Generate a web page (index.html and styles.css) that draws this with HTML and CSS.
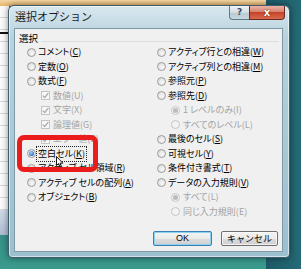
FILE: index.html
```html
<!DOCTYPE html>
<html lang="ja">
<head>
<meta charset="utf-8">
<link rel="stylesheet" href="styles.css">
</head>
<body>
<div class="dialog">
  <div class="titlebar">
    <span class="title">選択オプション</span>
    <div class="caps">
      <span class="cap help">?</span>
      <span class="cap close">x</span>
    </div>
  </div>
  <div class="client">
    <div class="group">
      <div class="legend"><span>選択</span><i class="rule"></i></div>
      <div class="cols">
        <div class="col">
          <div class="row"><span class="radio"></span><span class="lbl">コメント(<u>C</u>)</span></div>
          <div class="row"><span class="radio"></span><span class="lbl">定数(<u>O</u>)</span></div>
          <div class="row"><span class="radio"></span><span class="lbl">数式(<u>F</u>)</span></div>
          <div class="row sub dis"><span class="check"><svg viewBox="0 0 9 9" width="9" height="9"><path d="M1.8 4.6 L3.7 6.6 L7.3 2.2" fill="none" stroke="#a8a8a8" stroke-width="1.3"/></svg></span><span class="lbl">数値(U)</span></div>
          <div class="row sub dis"><span class="check"><svg viewBox="0 0 9 9" width="9" height="9"><path d="M1.8 4.6 L3.7 6.6 L7.3 2.2" fill="none" stroke="#a8a8a8" stroke-width="1.3"/></svg></span><span class="lbl">文字(X)</span></div>
          <div class="row sub dis"><span class="check"><svg viewBox="0 0 9 9" width="9" height="9"><path d="M1.8 4.6 L3.7 6.6 L7.3 2.2" fill="none" stroke="#a8a8a8" stroke-width="1.3"/></svg></span><span class="lbl">論理値(G)</span></div>
          <div class="row sub dis"><span class="check"><svg viewBox="0 0 9 9" width="9" height="9"><path d="M1.8 4.6 L3.7 6.6 L7.3 2.2" fill="none" stroke="#a8a8a8" stroke-width="1.3"/></svg></span><span class="lbl">エラー値(E)</span></div>
          <div class="row"><span class="radio on"></span><span class="lbl focus">空白セル(<u>K</u>)</span></div>
          <div class="row"><span class="radio"></span><span class="lbl">アクティブ セル領域(<u>R</u>)</span></div>
          <div class="row"><span class="radio"></span><span class="lbl">アクティブ セルの配列(<u>A</u>)</span></div>
          <div class="row"><span class="radio"></span><span class="lbl">オブジェクト(<u>B</u>)</span></div>
        </div>
        <div class="col">
          <div class="row"><span class="radio"></span><span class="lbl">アクティブ行との相違(<u>W</u>)</span></div>
          <div class="row"><span class="radio"></span><span class="lbl">アクティブ列との相違(<u>M</u>)</span></div>
          <div class="row"><span class="radio"></span><span class="lbl">参照元(<u>P</u>)</span></div>
          <div class="row"><span class="radio"></span><span class="lbl">参照先(<u>D</u>)</span></div>
          <div class="row sub dis"><span class="radio on"></span><span class="lbl">1 レベルのみ(I)</span></div>
          <div class="row sub dis"><span class="radio"></span><span class="lbl">すべてのレベル(L)</span></div>
          <div class="row"><span class="radio"></span><span class="lbl">最後のセル(<u>S</u>)</span></div>
          <div class="row"><span class="radio"></span><span class="lbl">可視セル(<u>Y</u>)</span></div>
          <div class="row"><span class="radio"></span><span class="lbl">条件付き書式(<u>T</u>)</span></div>
          <div class="row"><span class="radio"></span><span class="lbl">データの入力規則(<u>V</u>)</span></div>
          <div class="row sub dis"><span class="radio on"></span><span class="lbl">すべて(L)</span></div>
          <div class="row sub dis"><span class="radio"></span><span class="lbl">同じ入力規則(E)</span></div>
        </div>
      </div>
    </div>
    <div class="buttons">
      <span class="btn default">OK</span>
      <span class="btn">キャンセル</span>
    </div>
  </div>
</div>
<div class="highlight"></div>
<svg class="cursor" width="8" height="12" viewBox="0 0 8 12"><path d="M0.5 0.5 L0.5 9.5 L2.6 7.6 L4 11 L5.4 10.4 L4 7.2 L6.8 7.2 Z" fill="#fff" stroke="#000" stroke-width="0.9"/></svg>
</body>
</html>
```
FILE: styles.css
```css
html, body { margin: 0; padding: 0; }
body {
  width: 301px;
  height: 269px;
  overflow: hidden;
  position: relative;
  font-family: "Noto Sans CJK JP", "Noto Sans", sans-serif;
  background:
    linear-gradient(#f5d7a4, #e8b46c) 0 0 / 266px 6px no-repeat,
    linear-gradient(#111, #111) 0 32px / 9px 2px no-repeat,
    repeating-linear-gradient(to bottom, #fafafa 0 11px, #d6d6d6 11px 12px) 0 6px / 9px 204px no-repeat,
    linear-gradient(#d0dbe8, #aebbd0) 0 210px / 9px 25px no-repeat,
    linear-gradient(to right, #1d5966, #246a76) 266px 0 / 35px 269px no-repeat,
    linear-gradient(to bottom, #1f5f6c 0, #2a7b80 60%, #3a9a8c 100%);
}
.dialog {
  position: absolute;
  left: 8px;
  top: 5px;
  width: 282px;
  height: 253px;
  box-sizing: border-box;
  border: 1px solid #3f5d6b;
  border-radius: 6px 6px 4px 4px;
  background: linear-gradient(to bottom, #d9e8ef 0, #b8d2de 12%, #a8c7d5 60%, #9cc0cf 100%);
  box-shadow: 0 0 6px rgba(0,0,0,.45), inset 0 0 0 1px rgba(255,255,255,.55);
  padding: 0 6px 5px 5px;
  display: flex;
  flex-direction: column;
}
.titlebar {
  height: 22px;
  display: flex;
  justify-content: space-between;
  align-items: flex-start;
}
.title {
  margin: 3px 0 0 1px;
  font-size: 11px;
  line-height: 14px;
  color: #1a1a1a;
}
.caps {
  display: flex;
  margin-right: -2px;
  margin-top: 0;
}
.cap {
  height: 14px;
  box-sizing: border-box;
  display: flex;
  align-items: center;
  justify-content: center;
  font-family: "DejaVu Sans", sans-serif;
  font-weight: bold;
  line-height: 1;
}
.help {
  width: 20px;
  border: 1px solid #5f7a88;
  border-top: none;
  border-right: none;
  border-radius: 0 0 0 4px;
  background: linear-gradient(#eef3f6, #d2dde3 50%, #b9c9d2 51%, #c9d8e0);
  color: #3c4c56;
  font-size: 9px;
}
.close {
  width: 36px;
  border: 1px solid #6b2a22;
  border-top: none;
  border-radius: 0 0 4px 0;
  background: linear-gradient(#e9b3a6, #d7826d 45%, #c5432b 50%, #d96a4c);
  color: #fff;
  font-size: 10px;
  text-shadow: 0 0 1px #5a1a10, 0 0 1px #5a1a10;
}
.client {
  flex: 1;
  background: #f0f0f0;
  border: 1px solid #7f9aa6;
  display: flex;
  flex-direction: column;
  color: #000;
  font-size: 9px;
}
.group {
  flex: 1;
  margin: 0 3px 0 2px;
}
.legend {
  display: flex;
  align-items: center;
  height: 15px;
  margin-top: 2px;
}
.legend span {
  padding: 0 3px 0 2px;
  font-size: 9.5px;
  line-height: 15px;
}
.rule {
  flex: 1;
  height: 1px;
  margin-top: 5px;
  background: #d8dde0;
}
.cols {
  display: grid;
  grid-template-columns: 130px 1fr;
  padding-left: 10px;
  margin-top: -1px;
}
.row {
  display: flex;
  align-items: center;
  height: 14.5px;
  gap: 2px;
  white-space: nowrap;
}
.row.sub {
  padding-left: 14px;
  gap: 3px;
}
.lbl {
  line-height: 12px;
  font-feature-settings: "palt";
}
.dis .lbl { color: #a3a3a3; }
u { text-decoration-thickness: 1px; text-underline-offset: 1px; }
.radio {
  flex: none;
  width: 9px;
  height: 9px;
  box-sizing: border-box;
  border-radius: 50%;
  border: 1px solid #9c9c9c;
  background: radial-gradient(circle at 60% 65%, #f8f8f8 0, #e4e4e4 60%, #cfcfcf 100%);
  display: flex;
  align-items: center;
  justify-content: center;
}
.radio.on::after {
  content: "";
  width: 5px;
  height: 5px;
  border-radius: 50%;
  background: radial-gradient(circle at 40% 35%, #9fd4ff, #2a72c8 70%, #1b4f9a);
}
.dis .radio {
  border-color: #c6c6c6;
  background: #f3f3f3;
}
.dis .radio.on::after {
  background: #bcbcbc;
}
.check {
  flex: none;
  width: 9px;
  height: 9px;
  box-sizing: border-box;
  border: 1px solid #c4c4c4;
  background: #f7f7f7;
  display: flex;
}
.check svg { margin: -1px; }
.focus {
  outline: 1px dotted #222;
  outline-offset: 1px;
}
.buttons {
  display: flex;
  justify-content: flex-end;
  gap: 9px;
  padding: 0 4px 5px 0;
}
.btn {
  height: 15px;
  box-sizing: border-box;
  border: 1px solid #707070;
  border-radius: 2px;
  background: linear-gradient(#f3f3f3 0, #ebebeb 50%, #dddddd 51%, #cfcfcf 100%);
  display: flex;
  align-items: center;
  justify-content: center;
  font-size: 9px;
  line-height: 1;
  width: 57px;
  box-shadow: inset 0 0 0 1px rgba(255,255,255,.7);
}
.btn.default {
  width: 59px;
  border-color: #3c7fb1;
  box-shadow: inset 0 0 0 1px #8ed0f0;
  font-family: "Liberation Sans", sans-serif;
}
.highlight {
  position: absolute;
  left: 17px;
  top: 135px;
  width: 81px;
  height: 37px;
  box-sizing: border-box;
  border: 5px solid #ea1c1c;
  border-radius: 7px;
}
.cursor {
  position: absolute;
  left: 56px;
  top: 156px;
}
```
